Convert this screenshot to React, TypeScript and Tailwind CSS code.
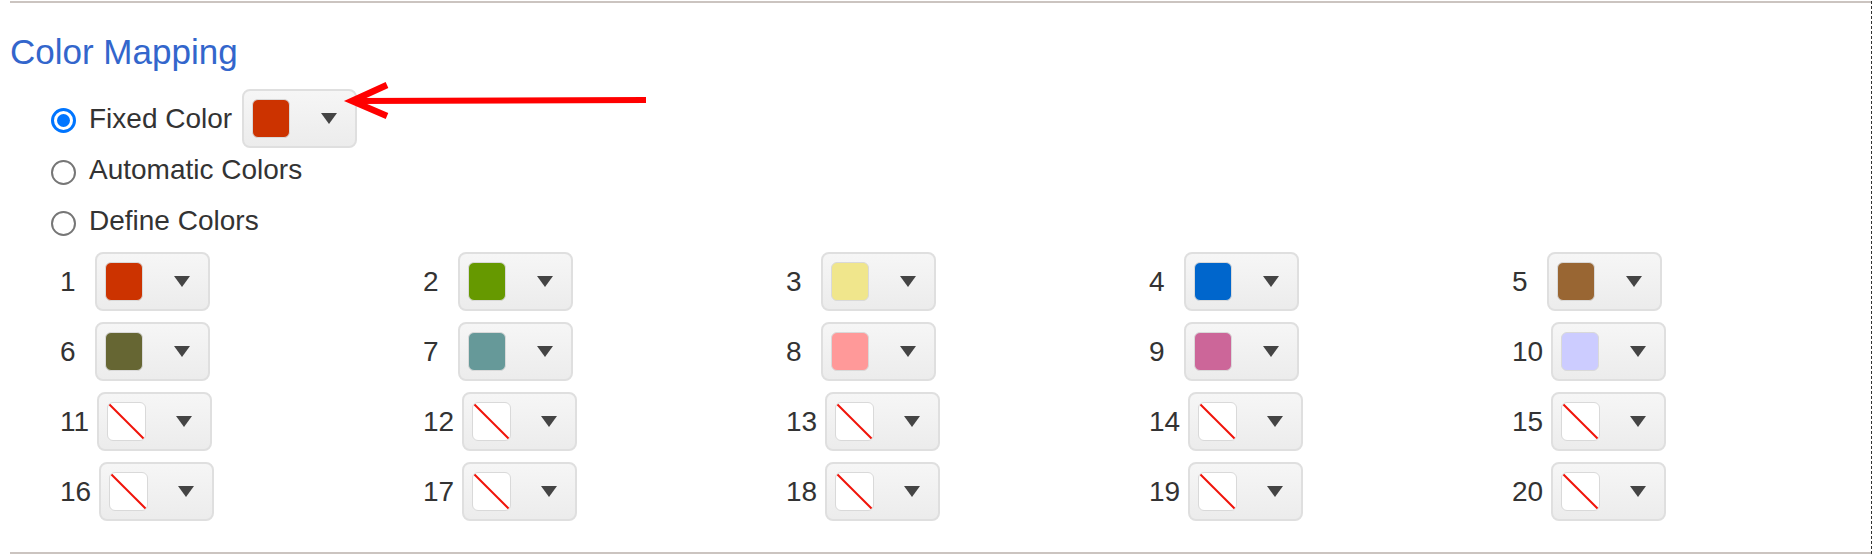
import React from 'react';

type Cell = { n: number; color?: string };

const cells: Cell[] = [
  { n: 1, color: '#cc3300' },
  { n: 2, color: '#669900' },
  { n: 3, color: '#f0e68c' },
  { n: 4, color: '#0066cc' },
  { n: 5, color: '#996633' },
  { n: 6, color: '#666633' },
  { n: 7, color: '#669999' },
  { n: 8, color: '#ff9999' },
  { n: 9, color: '#cc6699' },
  { n: 10, color: '#ccccff' },
  { n: 11 },
  { n: 12 },
  { n: 13 },
  { n: 14 },
  { n: 15 },
  { n: 16 },
  { n: 17 },
  { n: 18 },
  { n: 19 },
  { n: 20 },
];

function Swatch({ color }: { color?: string }) {
  if (!color) {
    return (
      <span className="block w-[39px] h-[39px] rounded-[6px] border-[1.5px] border-[#d9d9d9] bg-white overflow-hidden">
        <svg className="block w-full h-full" viewBox="0 0 100 100" preserveAspectRatio="none">
          <line x1="0" y1="0" x2="100" y2="100" stroke="#f0140a" strokeWidth="2" vectorEffect="non-scaling-stroke" />
        </svg>
      </span>
    );
  }
  return (
    <span
      className="block w-[38px] h-[39px] rounded-[6px] border-[1.5px] border-[#d9d9d9]"
      style={{ backgroundColor: color }}
    />
  );
}

function Caret() {
  return (
    <svg width="16" height="11" viewBox="0 0 16 11" className="block">
      <polygon points="0,0 16,0 8,11" fill="#444444" />
    </svg>
  );
}

function ColorButton({ color }: { color?: string }) {
  return (
    <div className="flex items-center w-[115px] h-[59px] pl-[8px] rounded-[8px] border-2 border-[#dfdfdf] bg-linear-to-b from-[#f6f6f6] to-[#ececec] shrink-0">
      <Swatch color={color} />
      <span className="ml-auto mr-[18px]">
        <Caret />
      </span>
    </div>
  );
}

function Radio({ checked }: { checked?: boolean }) {
  if (checked) {
    return (
      <span className="flex items-center justify-center w-[25px] h-[25px] rounded-full border-[3px] border-[#0075ff] bg-white translate-y-[2px] shrink-0">
        <span className="block w-[13px] h-[13px] rounded-full bg-[#0075ff]" />
      </span>
    );
  }
  return <span className="block w-[25px] h-[25px] rounded-full border-2 border-[#767676] bg-white translate-y-[2px] shrink-0" />;
}

export default function App() {
  return (
    <div className="relative w-[1873px] h-[559px] bg-white pt-[1px] pl-[10px] font-['Liberation_Sans',Arial,sans-serif] text-[#333333] overflow-hidden">
      <div className="w-[1862px] h-[553px] border-r border-dashed border-[#333333]">
        <div className="h-full border-t-2 border-b-2 border-solid border-[#cbc4c0]">
          <h2 className="mt-[29px] text-[35px] leading-[39px] text-[#3366cc]">Color Mapping</h2>

          <div className="ml-[41px] mt-[18px] flex flex-col">
            <div className="flex items-center h-[59px]">
              <Radio checked />
              <span className="ml-[13px] text-[28px] leading-[32px]">Fixed Color</span>
              <span className="ml-[10px]">
                <ColorButton color="#cc3300" />
              </span>
            </div>
            <div className="flex items-center h-[44px]">
              <Radio />
              <span className="ml-[13px] text-[28px] leading-[32px]">Automatic Colors</span>
            </div>
            <div className="flex items-center h-[44px] mt-[7px]">
              <Radio />
              <span className="ml-[13px] text-[28px] leading-[32px]">Define Colors</span>
            </div>
          </div>

          <div className="ml-[50px] mt-[9px] grid grid-cols-[363px_363px_363px_363px_1fr] gap-y-[11px]">
            {cells.map((cell) => (
              <div key={cell.n} className="flex items-center h-[59px]">
                <span className="min-w-[27px] mr-[8px] text-[28px] leading-[32px]">{cell.n}</span>
                <ColorButton color={cell.color} />
              </div>
            ))}
          </div>
        </div>
      </div>

      {/* annotation arrow pointing at the fixed colour picker */}
      <svg className="absolute left-[340px] top-[75px]" width="320" height="50" viewBox="0 0 320 50">
        <line x1="16" y1="26" x2="306" y2="25" stroke="#ff0000" strokeWidth="6" />
        <polyline
          points="47,10 12,26 47,41"
          fill="none"
          stroke="#ff0000"
          strokeWidth="6.5"
          strokeLinejoin="miter"
          strokeMiterlimit="10"
        />
      </svg>
    </div>
  );
}
